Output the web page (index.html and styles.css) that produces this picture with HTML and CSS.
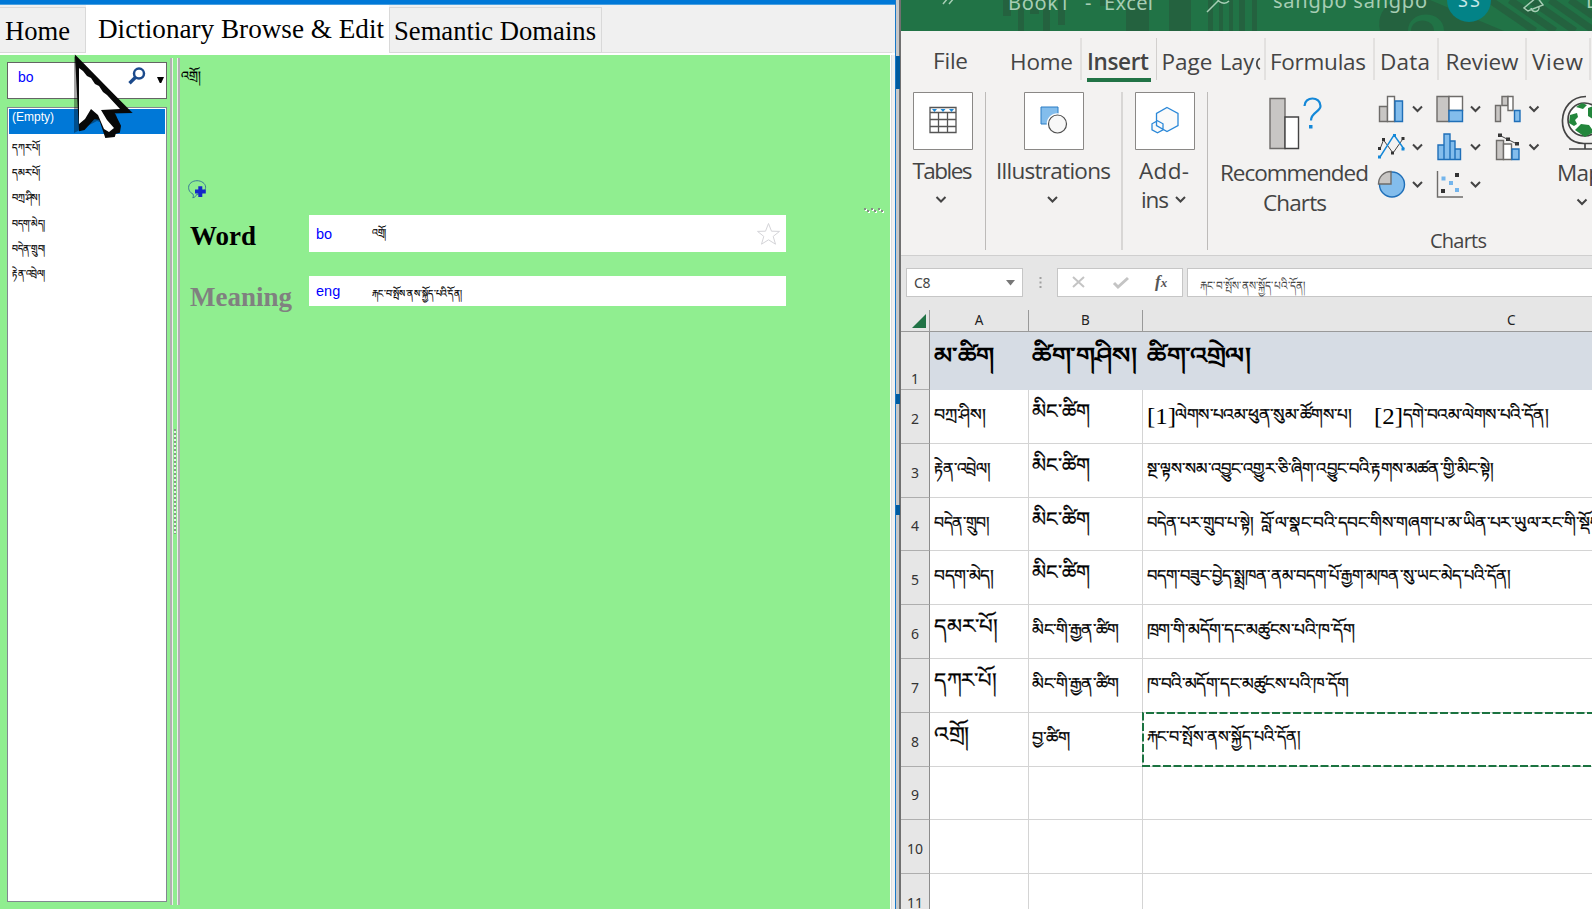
FILE: index.html
```html
<!DOCTYPE html>
<html lang="en">
<head>
<meta charset="utf-8">
<title>Dictionary and spreadsheet</title>
<link rel="stylesheet" href="styles.css">
</head>
<body>
<div class="desktop">
  <main class="dict">
    <div class="titlebar"></div>
    <nav class="tabs">
      <div class="tab home"><svg class="line"><text x="5" y="32" textLength="65" lengthAdjust="spacingAndGlyphs">Home</text></svg></div>
      <div class="tab active"><svg class="line"><text x="12" y="33" textLength="286" lengthAdjust="spacingAndGlyphs">Dictionary Browse &amp; Edit</text></svg></div>
      <div class="tab semantic"><svg class="line"><text x="4" y="32" textLength="202" lengthAdjust="spacingAndGlyphs">Semantic Domains</text></svg></div>
      <div class="strip"></div>
    </nav>
    <div class="workspace">
      <aside class="sidebar">
        <div class="search">
          <span class="lang">bo</span>
          <svg class="glass" width="18" height="18" viewBox="0 0 18 18"><circle cx="11" cy="6.6" r="5" fill="none" stroke="#1b4a8c" stroke-width="2.5"/><path d="M7.3 10.5 1.5 16.2" stroke="#1b4a8c" stroke-width="3.4"/></svg>
          <svg class="drop" width="7" height="6"><path d="M0 0h7L4.2 6H2.8z"/></svg>
        </div>
        <div class="list">
          <div class="empty">(Empty)</div>
          <svg class="item"><text x="3" y="14" textLength="28" lengthAdjust="spacingAndGlyphs">དཀར་པོ།</text></svg>
          <svg class="item"><text x="3" y="14" textLength="28" lengthAdjust="spacingAndGlyphs">དམར་པོ།</text></svg>
          <svg class="item"><text x="3" y="14" textLength="28" lengthAdjust="spacingAndGlyphs">བཀྲ་ཤིས།</text></svg>
          <svg class="item"><text x="3" y="14" textLength="33" lengthAdjust="spacingAndGlyphs">བདག་མེད།</text></svg>
          <svg class="item"><text x="3" y="14" textLength="33" lengthAdjust="spacingAndGlyphs">བདེན་གྲུབ།</text></svg>
          <svg class="item"><text x="3" y="14" textLength="33" lengthAdjust="spacingAndGlyphs">རྟེན་འབྲེལ།</text></svg>
        </div>
      </aside>
      <div class="splitter"><i class="grip"></i></div>
      <section class="entry">
        <svg class="headword"><text x="0" y="25" textLength="20" lengthAdjust="spacingAndGlyphs">འགྲོ།</text></svg>
        <svg class="note" width="19" height="19" viewBox="0 0 19 19"><path d="M5 14C1.5 12.500.6 9.500.6 7.500.6 3.500 4.500.7 9 .7s8.600 2.800 8.600 6.500-3 6.300-9 7.300c-.5 1.500-1.600 2.800-3.800 3.300C5.500 16.500 5.500 15.500 5 14z" fill="none" stroke="#3a7a98"/><path d="M10.300 6.300h4v3.200h3.500v4h-3.500v3.500h-4v-3.500H7v-4h3.300z" fill="#1428c8"/></svg>
        <div class="dots"><svg width="22" height="7"><g fill="#fff"><path d="M2 2h2v2H2zM5 4h2v2H5zM9 2h2v2H9zM12 4h2v2h-2zM16 2h2v2h-2zM19 4h2v2h-2z"/></g><g fill="#848e84"><path d="M1 1h2v2H1zM4 3h2v2H4zM8 1h2v2H8zM11 3h2v2h-2zM15 1h2v2h-2zM18 3h2v2h-2z"/></g></svg></div>
        <div class="field word">
          <svg class="label"><text x="0" y="30" textLength="66" lengthAdjust="spacingAndGlyphs">Word</text></svg>
          <div class="box"><span class="lang">bo</span><svg class="value"><text x="0" y="21" textLength="14" lengthAdjust="spacingAndGlyphs">འགྲོ།</text></svg>
          <svg class="star" width="25" height="24" viewBox="0 0 25 24"><path d="M12.500 1.500 15.500 9.200l8 .2-6.300 5 2.300 7.800-7-4.400-7 4.400 2.300-7.800-6.300-5 8-.2z" fill="none" stroke="#d4d4d8"/></svg></div>
        </div>
        <div class="field meaning">
          <svg class="label"><text x="0" y="30" textLength="102" lengthAdjust="spacingAndGlyphs">Meaning</text></svg>
          <div class="box"><span class="lang">eng</span><svg class="value"><text x="0" y="21" textLength="90" lengthAdjust="spacingAndGlyphs">རྐང་བ་སྤོས་ནས་སྐྱོད་པའི་དོན།</text></svg></div>
        </div>
      </section>
    </div>
  </main>
  <div class="edge"><b class="e1"></b><b class="e2"></b><b class="e3"></b></div>
  <main class="excel">
    <header class="bar">
      <svg width="692" height="31" viewBox="901 0 692 31">
        <g fill="#24623f"><path d="M1003 0h8v16h-8zM1018 0h6v31h-6zM1030 0h9v14h-9zM1043 0h7v31h-7zM1058 0h7v25h-7zM1100 0h14v6h-14zM1126 0h23v31h-23zM1169 0h22v31h-22zM1208 0h5v31h-5zM1219 0h4v31h-4zM1229 0h4v31h-4zM1239 0h6v31h-6zM1252 0h5v31h-5z"/><path d="M1380 31c-3-14 3-25 16-31h34l74 31h-60c0-22-36-22-36 0z"/></g>
        <path d="M1411 31c0-14 23-14 23 0z" fill="#24623f"/>
        <path d="M1490 0l45 31M1510 0l45 31M1530 0l45 31M1550 0l43 30M1570 0l23 16" stroke="#24623f" stroke-width="7"/>
        <g fill="none" stroke="#a6cdb4" stroke-width="1.500"><path d="M943 4l5-6M949 4l5-6M1207 12l11-11M1217-3a7 7 0 0 0 12 4M1524 8l4 3 15-6-6-8zM1531 8a4 4 0 0 0 8-1"/></g>
        <circle cx="1469" cy="0" r="22" fill="#038387"/>
        <g class="caption"><text x="1008" y="10" textLength="62">Book1</text><text x="1085" y="10">-</text><text x="1104" y="10" textLength="49">Excel</text><text x="1273" y="8" textLength="154">sangpo sangpo</text><text x="1586" y="8">D</text></g>
        <text class="initials" x="1458" y="7" textLength="22">SS</text>
      </svg>
    </header>
    <nav class="menu">
      <svg width="692" height="60" viewBox="901 31 692 60">
        <g class="ui"><text x="933" y="68.500" textLength="35">File</text><text x="1010" y="69.500" textLength="63">Home</text><text class="sel" x="1087" y="69.500" textLength="62">Insert</text><text x="1161.500" y="69.500" textLength="51">Page</text><text x="1220" y="69.500" textLength="34" lengthAdjust="spacingAndGlyphs">Lay</text><text x="1270" y="69.500" textLength="96">Formulas</text><text x="1380" y="69.500" textLength="50">Data</text><text x="1445.500" y="69.500" textLength="73">Review</text><text x="1532" y="69.500" textLength="51">View</text></g>
        <path d="M1260 58.500a4.500 5.500 0 0 0 0 10.500" fill="none" stroke="#444" stroke-width="1.700"/>
        <path d="M1081 38v42M1156.500 38v42M1265 38v42M1374 38v42M1438 38v42M1526 38v42M1590 38v42" stroke="#d2d0ce"/>
        <path d="M1087 78h64v4h-64z" fill="#217346"/>
      </svg>
    </nav>
    <section class="ribbon">
      <svg width="692" height="165" viewBox="901 91 692 165">
        <defs><path id="chev" d="M-4.500-2.500 0 2 4.500-2.500" fill="none" stroke="#444" stroke-width="2"/></defs>
        <path d="M985.500 92v158M1122 92v158M1207.500 92v158" stroke="#bdbbb9"/>
        <g fill="#fff" stroke="#8a8886"><path d="M913.500 92.500h59v57h-59zM1024.500 92.500h59v57h-59zM1135.500 92.500h59v57h-59z"/></g>
        <path d="M930 107.500h26v25h-26zM930 112.500h26M930 119.500h26M930 126.500h26M938.500 112v20M947.500 112v20" fill="#fff" stroke="#555" stroke-width="1.300"/>
        <path d="M932 109h5l-2.500 3zM940.500 109h5l-2.500 3zM949 109h5l-2.500 3z" fill="#1e88d6"/>
        <path d="M1041 107h17v17h-17z" fill="#83bdec" stroke="#2b7cc4"/><circle cx="1057.500" cy="124" r="9.300" fill="#f8f8f8" stroke="#fff" stroke-width="3"/><circle cx="1057.500" cy="124" r="9" fill="#f8f8f8" stroke="#505050" stroke-width="1.200"/>
        <path d="M1167 107.500l11 6v12l-11 6-10.500-6v-12zM1157.500 120.800l5.500 3v6l-5.500 3-5.500-3v-6z" fill="#fafafa" stroke="#2b88d8" stroke-width="1.300"/>
        <g class="ui"><text x="912.500" y="178.500" textLength="60">Tables</text><text x="996" y="178.500" textLength="115">Illustrations</text><text x="1139" y="178.500" textLength="50">Add-</text><text x="1141" y="208" textLength="28">ins</text><text x="1220" y="181" textLength="149">Recommended</text><text x="1263" y="210.500" textLength="64">Charts</text><text class="small" x="1430" y="248" textLength="57">Charts</text><text x="1557" y="181" textLength="55">Maps</text></g>
        <use href="#chev" x="941" y="199.500"/><use href="#chev" x="1052.500" y="199.500"/><use href="#chev" x="1180.500" y="199.500"/><use href="#chev" x="1582" y="202"/>
        <use href="#chev" x="1417.500" y="109"/><use href="#chev" x="1475.500" y="109"/><use href="#chev" x="1534" y="109"/><use href="#chev" x="1417.500" y="147"/><use href="#chev" x="1475.500" y="147"/><use href="#chev" x="1534" y="147"/><use href="#chev" x="1417.500" y="184.500"/><use href="#chev" x="1475.500" y="184.500"/>
        <g stroke="#6e6c6a" stroke-width="1.400" fill="#c8c6c4">
          <path d="M1270 98.500h15v50h-15z"/><path d="M1285 117h13.500v31.500H1285z" fill="#fff" stroke="#444"/>
          <path d="M1379.500 106.500h8v15h-8z"/><path d="M1387.500 96.500h7v25h-7z" fill="#fff"/><path d="M1395 101h7.500v20.500h-7.500z" fill="#83bdec" stroke="#1f6fb8"/>
          <path d="M1437 96.500h12v25h-12z"/><path d="M1449 96.500h13.500v14H1449z" fill="#fff"/><path d="M1449 110.500h13.500v11H1449z" fill="#83bdec" stroke="#1f6fb8"/>
          <path d="M1495.500 105.500h5v16h-5zM1502 96.500h6v9h-6z"/><path d="M1508 96.500h5v14h-5z" fill="#fff"/><path d="M1514.500 110.500h5.500v11h-5.500z" fill="#83bdec" stroke="#1f6fb8"/>
          <path d="M1496.500 140.500h7v19h-7z"/><path d="M1503.500 144h8v15.500h-8z" fill="#fff"/><path d="M1512 149h7v10.500h-7z" fill="#83bdec" stroke="#1f6fb8"/>
          <path d="M1438 159.500V145h6v-11h6v7h5v8h5.500v10.500zM1444 145v14M1450 141v18M1455 149v10" fill="#83bdec" stroke="#1f6fb8"/>
          <circle cx="1392" cy="184.500" r="12.500" fill="#83bdec" stroke="#1f6fb8"/><path d="M1391 171.500v12.500h-12.500c0-7 5-12.500 12.500-12.500z"/>
          <path d="M1437.500 171v26h25.500" fill="none"/>
        </g>
        <path d="M1304.500 106c0-10 16-10 16 0 0 6-9.500 6-9.500 14.500" fill="none" stroke="#1488d8" stroke-width="2.200"/><path d="M1309 125h3.500v3.500h-3.500z" fill="#1488d8"/>
        <path d="M1380 149l3.500-9 9.500 13 10.500-15" fill="none" stroke="#444"/><path d="M1380 157l14-22 10 14" fill="none" stroke="#1488d8" stroke-width="1.400"/>
        <path d="M1378 147h3v3h-3zM1382 138h3v3h-3zM1391 151.500h3v3h-3zM1401.500 137h3v3h-3zM1498 133.500h4v3.500h-4zM1506 137.500h4v3.500h-4zM1515 142h4v3.500h-4zM1455 173h4v4h-4zM1441 189h4v4h-4z" fill="#333"/><path d="M1499 135l18 9" stroke="#444"/>
        <path d="M1378 155.500h3v3h-3zM1393 134h3v3h-3zM1401.500 147.500h3v3h-3z" fill="#1488d8"/><path d="M1441.500 176.500h4v4h-4zM1449 181h4v4h-4zM1455 188h4v4h-4z" fill="#74b5ec"/>
        <circle cx="1584.500" cy="119.500" r="16.500" fill="#fff" stroke="#444" stroke-width="1.700"/><path d="M1570 115l7-2 1 4-3 3 2 4-3 2-5-3zM1576 107l6-4 5 2-4 4zM1588 108l8-3v16l-8-5zM1575 130l6-6 8 1 5 7-9 5z" fill="#23863c"/><path d="M1586 96.500c-30 0-32 47-2 47h8M1585 144v5M1569 149h24" fill="none" stroke="#444" stroke-width="1.700"/>
      </svg>
    </section>
    <section class="formula">
      <div class="cellname">C8<svg width="9" height="6"><path d="M0 0h9L4.500 5.500z" fill="#777"/></svg></div>
      <svg class="kebab" width="3" height="13"><path d="M.5 1h2v2h-2zM.5 5.500h2v2h-2zM.5 10h2v2h-2z" fill="#a0a0a0"/></svg>
      <div class="tools"><svg width="124" height="27"><path d="M15 8l11 10M26 8 15 18" stroke="#c4c4c4" stroke-width="2"/><path d="M56 14l4 4 10-9" fill="none" stroke="#c4c4c4" stroke-width="3"/><text class="fx" x="97" y="18">f<tspan class="sub">x</tspan></text></svg></div>
      <div class="input"><svg class="line"><text x="12" y="21" textLength="106" lengthAdjust="spacingAndGlyphs">རྐང་བ་སྤོས་ནས་སྐྱོད་པའི་དོན།</text></svg></div>
    </section>
    <section class="sheet">
      <div class="row cols"><div class="rh"><svg width="14" height="14"><path d="M14 0v14H0z" fill="#217346"/></svg></div><div class="a">A</div><div class="b">B</div><div class="c">C</div></div>
      <div class="row first"><div class="rh">1</div>
        <div class="a"><svg class="line"><text x="4" y="31" textLength="60" lengthAdjust="spacingAndGlyphs">མ་ཚིག</text></svg></div>
        <div class="b"><svg class="line"><text x="3" y="31" textLength="105" lengthAdjust="spacingAndGlyphs">ཚིག་གཤིས།</text></svg></div>
        <div class="c"><svg class="line"><text x="4" y="31" textLength="104" lengthAdjust="spacingAndGlyphs">ཚིག་འགྲེལ།</text></svg></div></div>
      <div class="row"><div class="rh">2</div>
        <div class="a"><svg class="line"><text x="4" y="30" textLength="52" lengthAdjust="spacingAndGlyphs">བཀྲ་ཤིས།</text></svg></div>
        <div class="b"><svg class="line big"><text x="3" y="28" textLength="58" lengthAdjust="spacingAndGlyphs">མིང་ཚིག</text></svg></div>
        <div class="c"><svg class="line"><text class="num" x="4" y="34" textLength="29" lengthAdjust="spacingAndGlyphs">[1]</text><text x="32" y="30" textLength="177" lengthAdjust="spacingAndGlyphs">ལེགས་པའམ་ཕུན་སུམ་ཚོགས་པ།</text><text class="num" x="231" y="34" textLength="29" lengthAdjust="spacingAndGlyphs">[2]</text><text x="260" y="30" textLength="146" lengthAdjust="spacingAndGlyphs">དགེ་བའམ་ལེགས་པའི་དོན།</text></svg></div></div>
      <div class="row"><div class="rh">3</div>
        <div class="a"><svg class="line"><text x="4" y="29.500" textLength="57" lengthAdjust="spacingAndGlyphs">རྟེན་འབྲེལ།</text></svg></div>
        <div class="b"><svg class="line big"><text x="3" y="28" textLength="58" lengthAdjust="spacingAndGlyphs">མིང་ཚིག</text></svg></div>
        <div class="c"><svg class="line"><text x="3.500" y="29.500" textLength="348" lengthAdjust="spacingAndGlyphs">སྔ་ལྟས་སམ་འབྱུང་འགྱུར་ཅི་ཞིག་འབྱུང་བའི་རྟགས་མཚན་གྱི་མིང་སྟེ།</text></svg></div></div>
      <div class="row"><div class="rh">4</div>
        <div class="a"><svg class="line"><text x="4" y="29.500" textLength="56" lengthAdjust="spacingAndGlyphs">བདེན་གྲུབ།</text></svg></div>
        <div class="b"><svg class="line big"><text x="3" y="28" textLength="58" lengthAdjust="spacingAndGlyphs">མིང་ཚིག</text></svg></div>
        <div class="c"><svg class="line"><text x="3.500" y="29.500" textLength="108" lengthAdjust="spacingAndGlyphs">བདེན་པར་གྲུབ་པ་སྟེ།</text><text x="118" y="29.500" textLength="338" lengthAdjust="spacingAndGlyphs">བློ་ལ་སྣང་བའི་དབང་གིས་གཞག་པ་མ་ཡིན་པར་ཡུལ་རང་གི་སྡོད</text></svg></div></div>
      <div class="row"><div class="rh">5</div>
        <div class="a"><svg class="line"><text x="4" y="29.500" textLength="60" lengthAdjust="spacingAndGlyphs">བདག་མེད།</text></svg></div>
        <div class="b"><svg class="line big"><text x="3" y="28" textLength="58" lengthAdjust="spacingAndGlyphs">མིང་ཚིག</text></svg></div>
        <div class="c"><svg class="line"><text x="3.500" y="29.500" textLength="365" lengthAdjust="spacingAndGlyphs">བདག་བཟུང་བྱེད་སྨྲཁན་ནམ་བདག་པོ་རྒྱག་མཁན་སུ་ཡང་མེད་པའི་དོན།</text></svg></div></div>
      <div class="row"><div class="rh">6</div>
        <div class="a"><svg class="line big"><text x="4" y="28" textLength="63" lengthAdjust="spacingAndGlyphs">དམར་པོ།</text></svg></div>
        <div class="b"><svg class="line"><text x="3" y="29.500" textLength="87" lengthAdjust="spacingAndGlyphs">མིང་གི་རྒྱན་ཚིག</text></svg></div>
        <div class="c"><svg class="line"><text x="3.500" y="29.500" textLength="208" lengthAdjust="spacingAndGlyphs">ཁྲག་གི་མདོག་དང་མཚུངས་པའི་ཁ་དོག</text></svg></div></div>
      <div class="row"><div class="rh">7</div>
        <div class="a"><svg class="line big"><text x="4" y="28" textLength="62" lengthAdjust="spacingAndGlyphs">དཀར་པོ།</text></svg></div>
        <div class="b"><svg class="line"><text x="3" y="29.500" textLength="87" lengthAdjust="spacingAndGlyphs">མིང་གི་རྒྱན་ཚིག</text></svg></div>
        <div class="c"><svg class="line"><text x="3.500" y="29.500" textLength="202" lengthAdjust="spacingAndGlyphs">ཁ་བའི་མདོག་དང་མཚུངས་པའི་ཁ་དོག</text></svg></div></div>
      <div class="row"><div class="rh">8</div>
        <div class="a"><svg class="line big"><text x="4" y="28" textLength="35" lengthAdjust="spacingAndGlyphs">འགྲོ།</text></svg></div>
        <div class="b"><svg class="line"><text x="3" y="29.500" textLength="38" lengthAdjust="spacingAndGlyphs">བྱ་ཚིག</text></svg></div>
        <div class="c"><svg class="line"><path class="ants" d="M452 0H0V53H452"/><text x="3.500" y="29" textLength="154" lengthAdjust="spacingAndGlyphs">རྐང་བ་སྤོས་ནས་སྐྱོད་པའི་དོན།</text></svg></div></div>
      <div class="row"><div class="rh">9</div><div class="a"></div><div class="b"></div><div class="c"></div></div>
      <div class="row"><div class="rh">10</div><div class="a"></div><div class="b"></div><div class="c"></div></div>
      <div class="row"><div class="rh">11</div><div class="a"></div><div class="b"></div><div class="c"></div></div>
    </section>
  </main>
  <svg class="cursor" width="64" height="86" viewBox="0 0 64 86"><path d="M1 2 60 59 43 60 47 77 37 83 32 70 24 67 1 79z" fill="#000" opacity=".35"/><path d="M3 3 57 58H40l2 4 5 10-1 6-4 1-1 3-8 1-6-18-6-1-10 11-4 1z" fill="#080808" stroke="#080808" stroke-width="2"/><path d="M6 14 10 17 14 22 18 24 22 30 26 32 30 38 34 41 47 55 28 56 34 66 41 74 36 78 31 75 25 61 18 55 12 65 6 70z" fill="#fff"/></svg>
</div>
</body>
</html>
```
FILE: styles.css
```css
* { box-sizing: border-box; }
body { margin: 0; overflow: hidden; background: #fff; }
svg { display: block; flex: none; overflow: visible; }
.desktop { position: relative; display: flex; width: 1592px; height: 909px; overflow: hidden; font-family: "Liberation Serif", serif; }
.line { width: 100%; height: 100%; }

/* dictionary window */
.dict { width: 895px; display: flex; flex-direction: column; background: #f0f0f0; }
.titlebar { height: 5px; background: #0078d7; border-bottom: 1px solid #4aa0e0; }
.tabs { display: flex; align-items: flex-end; height: 50px; border-bottom: 2px solid #fff; font-size: 27px; }
.tab { height: 46px; border: 1px solid #d9d9d9; background: #f0f0f0; }
.home { width: 86px; border-left: 0; }
.active { width: 303px; height: 50px; margin-bottom: -2px; background: #fff; border: 0; }
.semantic { width: 213px; }
.strip { width: 290px; height: 1px; background: #dcdcdc; }
.workspace { flex: 1; display: flex; width: 890px; background: #90ee90; box-shadow: 1px 0 #fff, 2px 0 #dcdcdc; }
.sidebar { width: 167px; padding: 7px 0 0 7px; display: flex; flex-direction: column; gap: 8px; }
.search { height: 37px; display: flex; background: #fff; border: 1px solid #646464; padding: 4px 2px 0 10px; }
.lang { color: #00f; font: 14px/20px "Liberation Sans", Arial, sans-serif; }
.glass { margin-left: 94px; }
.drop { margin: 10px 0 0 auto; }
.list { height: 795px; background: #fff; border: 1px solid #828790; padding: 1px; }
.empty { height: 25px; padding-left: 3px; background: #0078d7; color: #fff; font: 12px/17px "Liberation Sans", Arial, sans-serif; margin-bottom: 3px; }
.item { width: 100%; height: 25.2px; font-size: 10px; }
.splitter { width: 10px; margin: 3px 0 4px 3px; display: flex; border-left: 2px solid #b0b0b0; border-right: 2px solid #b0b0b0; box-shadow: inset 1px 0 #eee, inset -1px 0 #eee; align-items: center; justify-content: center; }
.grip { width: 2px; height: 105px; background: repeating-linear-gradient(#8a968a 0 2px, #e8f4e8 2px 4px); }
.entry { flex: 1; display: flex; flex-direction: column; padding-left: 10px; }
.headword { width: 40px; height: 125px; margin-left: -9px; font-size: 12px; }
.note { margin-left: -2px; }
.dots { align-self: flex-end; margin: 8px 5px 0; height: 8px; }
.field { display: flex; font-size: 27px; font-weight: bold; }
.label { width: 119px; height: 36px; }
.box { width: 477px; display: flex; align-items: center; background: #fff; padding-left: 7px; font-weight: normal; }
.box .lang { width: 56px; font-size: 14.500px; }
.word { height: 37px; }
.meaning { height: 30px; margin-top: 24px; }
.meaning .label { fill: #808080; }
.value { width: 380px; height: 100%; font-size: 10px; }
.star { margin-left: 4px; }
.item text, .value text, .headword text { stroke: #000; stroke-width: .2px; }

.edge { position: relative; width: 6px; background: linear-gradient(90deg, #1878c8 0 1px, #c8c8c8 1px 4px, #707070 4px 6px); }
.edge b { position: absolute; left: 1px; width: 4px; background: #005a9e; height: 10px; }
.edge .e1 { top: 56px; height: 33px; }
.edge .e2 { top: 394px; }
.edge .e3 { top: 505px; }

/* spreadsheet window */
.excel { width: 691px; display: flex; flex-direction: column; overflow: hidden; background: #e6e6e6; font-family: "Noto Sans", "Open Sans", sans-serif; }
.excel > * { flex: none; }
.bar { height: 31px; background: #217346; overflow: hidden; }
.caption { fill: #a6cdb4; font-size: 20px; }
.initials { fill: #c8e8e8; font-size: 18px; }
.menu { height: 60px; background: #f3f2f1; }
.ribbon { height: 165px; background: #f3f2f1; border-bottom: 1px solid #cfcfcf; }
.ui { fill: #444; font-family: "Open Sans", "Noto Sans", sans-serif; font-size: 22.500px; }
.ui .sel { font-weight: 600; }
.ui .small { font-size: 20px; }
.formula { height: 54px; padding: 12px 0 13px 5px; display: flex; align-items: center; }
.cellname, .tools, .input { height: 29px; background: #fff; border: 1px solid #c6c6c6; }
.cellname { width: 117px; padding: 0 7px; display: flex; align-items: center; justify-content: space-between; font-size: 14px; letter-spacing: -.3px; color: #444; }
.kebab { margin: 0 15px 0 16px; }
.tools { width: 126px; margin-right: 4px; }
.fx { font: italic bold 17px "Liberation Serif", serif; fill: #555; }
.sub { font-size: 13px; }
.input { flex: 1; border-right: 0; font: 12px "Liberation Serif", serif; fill: #444; }

.row { display: grid; grid-template-columns: 29px 99px 114px 450px; grid-template-rows: 100%; height: 53.800px; background: #fff; }
.row > div { border-right: 1px solid #d4d4d4; border-bottom: 1px solid #d4d4d4; font: 16px "Liberation Serif", serif; }
.row .line text { stroke: #000; stroke-width: .3px; }
.row .line .num { stroke: none; }
.row > .rh { display: flex; align-items: flex-end; justify-content: center; padding-bottom: 14px; background: #e6e6e6; border-right: 1px solid #8c8c8c; border-bottom-color: #adadad; font: 14px/20px "Noto Sans", sans-serif; color: #333; }
.cols { height: 22px; }
.row.cols > div { background: #e6e6e6; border-color: #999; font: 13.500px/14px "Noto Sans", sans-serif; text-align: center; padding-top: 3px; color: #222; }
.row.cols > .rh { padding: 0 3px 3px 0; justify-content: flex-end; }
.row.cols > .c { text-align: left; padding-left: 364px; }
.first { height: 58px; }
.row.first > div { font: bold 22px "Liberation Serif", serif; background: #d6dce4; border-color: #d6dce4; }
.row.first .line text { stroke: none; }
.row.first > .rh { background: #e6e6e6; padding-bottom: 0; font: 14px/20px "Noto Sans", sans-serif; border-color: #adadad; border-right-color: #8c8c8c; }
.row .big { font-size: 20px; }
.num { font-size: 23px; }
.ants { fill: none; stroke: #1b7340; stroke-width: 2; stroke-dasharray: 8 2.500; }
.cursor { position: absolute; left: 73px; top: 54px; }
```
